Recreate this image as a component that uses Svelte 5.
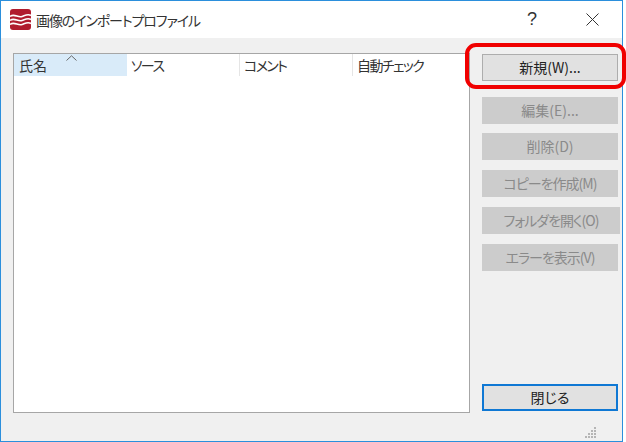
<script lang="ts">
  const columns = [
    { label: '氏名', width: 113, sorted: true },
    { label: 'ソース', width: 113, sorted: false },
    { label: 'コメント', width: 113, sorted: false },
    { label: '自動チェック', width: 116, sorted: false },
  ];
  const disabledButtons = [
    { label: '編集(E)...', tight: false },
    { label: '削除(D)', tight: false },
    { label: 'コピーを作成(M)', tight: true },
    { label: 'フォルダを開く(O)', tight: true },
    { label: 'エラーを表示(V)', tight: true },
  ];
  const gripDots = [[9, 0], [6, 3], [9, 3], [3, 6], [6, 6], [9, 6], [0, 9], [3, 9], [6, 9], [9, 9]];
</script>

<div class="window">
  <header class="titlebar">
    <svg class="app-icon" width="21" height="21" viewBox="0 0 21 21">
      <rect x="0" y="0" width="21" height="21" rx="3" fill="#b01c2e" />
      <path d="M0 7.5 C4 4 8 9 12 7.5 S18 4.5 21 6.5 M0 11.5 C4 8 8 13 12 11.5 S18 8.5 21 10.5 M0 15.5 C4 12 8 17 12 15.5 S18 12.5 21 14.5" fill="none" stroke="#fff" stroke-width="1.6" />
    </svg>
    <span class="title">画像のインポートプロファイル</span>
    <span class="help">?</span>
    <svg class="close-x" width="13" height="13" viewBox="0 0 13 13">
      <path d="M0.5 0.5 L12.5 12.5 M12.5 0.5 L0.5 12.5" stroke="#333" stroke-width="1" fill="none" />
    </svg>
  </header>

  <main class="content">
    <section class="list">
      <div class="list-head">
        {#each columns as col}
          <div class="col" class:sorted={col.sorted} style="width: {col.width}px">
            {col.label}
            {#if col.sorted}
              <svg class="sort" width="11" height="6" viewBox="0 0 11 6">
                <path d="M0.5 5.5 L5.5 0.8 L10.5 5.5" fill="none" stroke="#666" stroke-width="1" />
              </svg>
            {/if}
          </div>
        {/each}
      </div>
    </section>

    <aside class="side">
      <button class="btn first">新規(W)...</button>
      <div class="disabled-group">
        {#each disabledButtons as b}
          <button class="btn" class:tight={b.tight} class:wide={b.label.startsWith('フォルダ')} disabled>{b.label}</button>
        {/each}
      </div>
      <button class="btn default">閉じる</button>
    </aside>
  </main>

  <svg class="grip" width="11" height="11" viewBox="0 0 11 11">
    {#each gripDots as d}
      <rect x={d[0]} y={d[1]} width="2" height="2" fill="#b5b5b5" />
    {/each}
  </svg>

  <div class="highlight"></div>
</div>

<style>
  :global(body) {
    margin: 0;
    background: #fff;
  }

  .window {
    position: relative;
    box-sizing: border-box;
    width: 623px;
    height: 442px;
    display: flex;
    flex-direction: column;
    border: 1px solid #2b8fdc;
    background: #f0f0f0;
    font-family: "Noto Sans CJK JP", "Liberation Sans", sans-serif;
    font-feature-settings: "palt";
    color: #222;
  }

  .titlebar {
    height: 37px;
    flex: none;
    display: flex;
    align-items: center;
    background: #fff;
    padding-left: 9px;
  }

  .app-icon {
    margin-right: 5px;
    margin-top: -1px;
  }

  .title {
    font-size: 14px;
    letter-spacing: -1.1px;
    color: #333;
    flex: 1;
  }

  .help {
    font-family: "Liberation Sans", sans-serif;
    font-size: 18px;
    color: #333;
    margin-right: 49px;
  }

  .close-x {
    margin-right: 23px;
  }

  .content {
    flex: 1;
    display: flex;
    padding: 15px 4px 28px 12px;
    gap: 12px;
  }

  .list {
    box-sizing: border-box;
    width: 457px;
    background: #fff;
    border: 1px solid #a6a6a6;
  }

  .list-head {
    display: flex;
    height: 22px;
  }

  .col {
    position: relative;
    box-sizing: border-box;
    padding-left: 4px;
    font-size: 14px;
    letter-spacing: -1.6px;
    line-height: 23px;
    color: #333;
    border-right: 1px solid #e5e5e5;
  }

  .col:last-child {
    border-right: none;
  }

  .col.sorted {
    background: #d9ebf9;
    border-right: none;
    padding-left: 5px;
    letter-spacing: 0;
  }

  .sort {
    position: absolute;
    left: 52px;
    top: 1px;
  }

  .side {
    width: 136px;
    display: flex;
    flex-direction: column;
  }

  .disabled-group {
    display: flex;
    flex-direction: column;
    gap: 10px;
    margin-top: 16px;
  }

  .btn {
    box-sizing: border-box;
    flex: none;
    height: 27px;
    width: 136px;
    padding: 0 0 2px;
    font-family: inherit;
    font-feature-settings: inherit;
    font-size: 14px;
    color: #222;
    background: #e1e1e1;
    border: 1px solid #adadad;
  }

  .btn.first {
    margin-top: 1px;
  }

  .btn:disabled {
    background: #cccccc;
    border-color: #cccccc;
    color: #8a8a8a;
  }

  .disabled-group .btn:first-child {
    margin-bottom: -1px;
  }

  .btn.tight {
    letter-spacing: -1px;
  }

  .btn.wide {
    width: 138px;
  }

  .btn.default {
    margin-top: auto;
    margin-bottom: 2px;
    border: 2px solid #0f78d4;
  }

  .grip {
    position: absolute;
    right: 26px;
    bottom: 3px;
  }

  .highlight {
    position: absolute;
    left: 464px;
    top: 42px;
    width: 161px;
    height: 46px;
    box-sizing: border-box;
    border: 4px solid #f00000;
    border-radius: 11px;
  }
</style>
